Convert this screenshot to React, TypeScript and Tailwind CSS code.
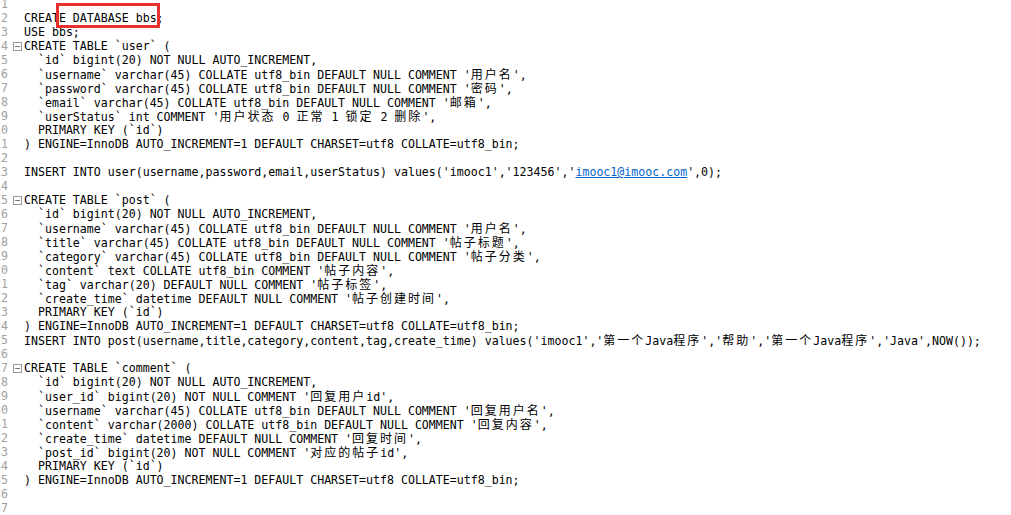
import React from "react";

type Line = { text: string; fold?: boolean; link?: string };

const LINES: Line[] = [
  { text: "" },
  { text: "CREATE DATABASE bbs;" },
  { text: "USE bbs;" },
  { text: "CREATE TABLE `user` (", fold: true },
  { text: "  `id` bigint(20) NOT NULL AUTO_INCREMENT," },
  { text: "  `username` varchar(45) COLLATE utf8_bin DEFAULT NULL COMMENT '用户名'," },
  { text: "  `password` varchar(45) COLLATE utf8_bin DEFAULT NULL COMMENT '密码'," },
  { text: "  `email` varchar(45) COLLATE utf8_bin DEFAULT NULL COMMENT '邮箱'," },
  { text: "  `userStatus` int COMMENT '用户状态 0 正常 1 锁定 2 删除'," },
  { text: "  PRIMARY KEY (`id`)" },
  { text: ") ENGINE=InnoDB AUTO_INCREMENT=1 DEFAULT CHARSET=utf8 COLLATE=utf8_bin;" },
  { text: "" },
  {
    text: "INSERT INTO user(username,password,email,userStatus) values('imooc1','123456','imooc1@imooc.com',0);",
    link: "imooc1@imooc.com",
  },
  { text: "" },
  { text: "CREATE TABLE `post` (", fold: true },
  { text: "  `id` bigint(20) NOT NULL AUTO_INCREMENT," },
  { text: "  `username` varchar(45) COLLATE utf8_bin DEFAULT NULL COMMENT '用户名'," },
  { text: "  `title` varchar(45) COLLATE utf8_bin DEFAULT NULL COMMENT '帖子标题'," },
  { text: "  `category` varchar(45) COLLATE utf8_bin DEFAULT NULL COMMENT '帖子分类'," },
  { text: "  `content` text COLLATE utf8_bin COMMENT '帖子内容'," },
  { text: "  `tag` varchar(20) DEFAULT NULL COMMENT '帖子标签'," },
  { text: "  `create_time` datetime DEFAULT NULL COMMENT '帖子创建时间'," },
  { text: "  PRIMARY KEY (`id`)" },
  { text: ") ENGINE=InnoDB AUTO_INCREMENT=1 DEFAULT CHARSET=utf8 COLLATE=utf8_bin;" },
  {
    text: "INSERT INTO post(username,title,category,content,tag,create_time) values('imooc1','第一个Java程序','帮助','第一个Java程序','Java',NOW());",
  },
  { text: "" },
  { text: "CREATE TABLE `comment` (", fold: true },
  { text: "  `id` bigint(20) NOT NULL AUTO_INCREMENT," },
  { text: "  `user_id` bigint(20) NOT NULL COMMENT '回复用户id'," },
  { text: "  `username` varchar(45) COLLATE utf8_bin DEFAULT NULL COMMENT '回复用户名'," },
  { text: "  `content` varchar(2000) COLLATE utf8_bin DEFAULT NULL COMMENT '回复内容'," },
  { text: "  `create_time` datetime DEFAULT NULL COMMENT '回复时间'," },
  { text: "  `post_id` bigint(20) NOT NULL COMMENT '对应的帖子id'," },
  { text: "  PRIMARY KEY (`id`)" },
  { text: ") ENGINE=InnoDB AUTO_INCREMENT=1 DEFAULT CHARSET=utf8 COLLATE=utf8_bin;" },
  { text: "" },
  { text: "" },
];

// CJK runs are double width in the editor
const Segments = ({ text }: { text: string }) => {
  const parts = text.split(/([\u3000-\u9fff]+)/);
  return (
    <>
      {parts.map((p, i) =>
        /[\u3000-\u9fff]/.test(p) ? (
          <span
            key={i}
            className="font-['Noto_Sans_CJK_SC',sans-serif] text-[12px] tracking-[2px]"
          >
            {p}
          </span>
        ) : (
          <span key={i}>{p}</span>
        )
      )}
    </>
  );
};

const CodeText = ({ line }: { line: Line }) => {
  if (line.link) {
    const idx = line.text.indexOf(line.link);
    return (
      <>
        <Segments text={line.text.slice(0, idx)} />
        <span className="text-[#0066cc] underline">{line.link}</span>
        <Segments text={line.text.slice(idx + line.link.length)} />
      </>
    );
  }
  return <Segments text={line.text} />;
};

const FoldBox = () => (
  <div className="w-[9px] h-[9px] border border-[#9a9a9a] flex items-center justify-center bg-white">
    <div className="w-[5px] h-px bg-[#777]" />
  </div>
);

export default function App() {
  return (
    <div className="relative w-[1011px] h-[515px] bg-white overflow-hidden font-['DejaVu_Sans_Mono',monospace] text-[11.6px] text-black">
      <div className="-mt-[3px] flex flex-col">
        {LINES.map((line, i) => (
          <div key={i} className="flex items-center h-[14px] leading-[14px]">
            <div className="w-[8px] shrink-0 flex justify-end overflow-hidden text-[#a0a0a0]">
              <span>{i + 1}</span>
            </div>
            <div className="w-[16px] shrink-0 flex items-center pl-[5px]">
              {line.fold && <FoldBox />}
            </div>
            <div className="whitespace-pre">
              <CodeText line={line} />
            </div>
          </div>
        ))}
      </div>

      {/* red highlight annotation */}
      <div className="absolute left-[56px] top-[3px] w-[104px] h-[25px] border-[3px] border-[#e8312f]" />
    </div>
  );
}
